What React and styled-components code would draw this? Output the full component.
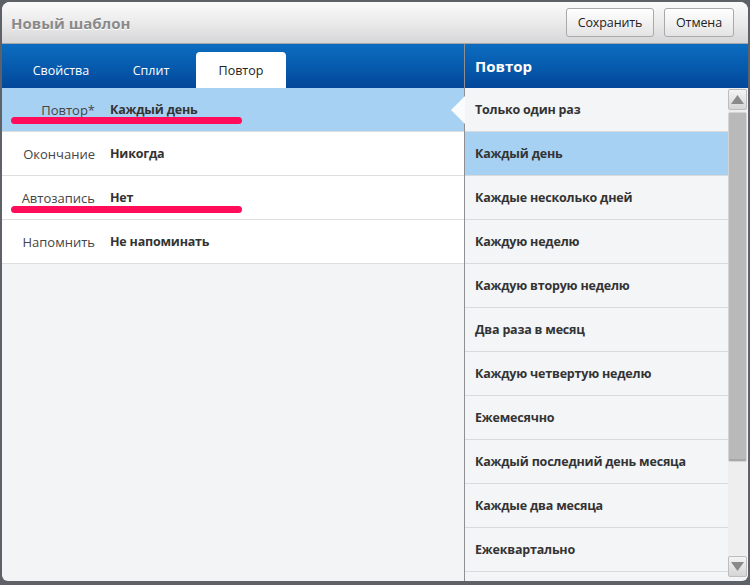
import React from "react";
import styled, { createGlobalStyle } from "styled-components";

const Global = createGlobalStyle`
  html, body { margin: 0; padding: 0; background: #5e6268; }
  body { font-family: "Open Sans", "Liberation Sans", sans-serif; }
  #root { padding: 2px 2px 0 2px; }
`;

const Window = styled.div`
  height: 579px;
  border-radius: 8px 8px 6px 6px;
  overflow: hidden;
  background: #f3f4f6;
  display: flex;
  flex-direction: column;
`;

const TitleBar = styled.div`
  height: 41px;
  flex: none;
  display: flex;
  align-items: center;
  padding: 0 14px 0 9px;
  background: linear-gradient(#fbfbfb, #e9e9ea 55%, #d6d6d8);
  border-bottom: 1px solid #a7a7a7;
`;

const Title = styled.div`
  flex: 1;
  font-size: 15px;
  font-weight: 700;
  color: #8a8a8a;
  text-shadow: 0 1px 0 #fff;
`;

const Button = styled.button`
  font-family: inherit;
  font-size: 12.5px;
  letter-spacing: -0.1px;
  color: #222;
  height: 29px;
  width: ${(p) => p.$w}px;
  padding: 0;
  margin-left: 10px;
  border: 1px solid #a9a9a9;
  border-radius: 3px;
  background: linear-gradient(#ffffff, #f2f2f2 50%, #e3e3e3);
  box-shadow: inset 0 1px 0 #fff;
`;

const Body = styled.div`
  flex: 1;
  display: flex;
  min-height: 0;
`;

const LeftPanel = styled.div`
  width: 462px;
  flex: none;
  display: flex;
  flex-direction: column;
  border-right: 1px solid #8d8f93;
`;

const BlueBar = styled.div`
  height: 44px;
  flex: none;
  background: linear-gradient(#0c6dc0, #0659ac 55%, #03479a);
  display: flex;
  align-items: flex-end;
`;

const Tabs = styled(BlueBar)`
  padding-left: 14px;
`;

const Tab = styled.div`
  width: 90px;
  height: 36px;
  display: flex;
  align-items: center;
  justify-content: center;
  font-size: 12.5px;
  color: ${(p) => (p.$active ? "#222" : "#fff")};
  background: ${(p) => (p.$active ? "#fff" : "transparent")};
  border-radius: 4px 4px 0 0;
`;

const Row = styled.div`
  position: relative;
  height: 43px;
  display: flex;
  align-items: center;
  font-size: 13px;
  background: ${(p) => (p.$selected ? "#a7d1f2" : "#fff")};
  border-bottom: 1px solid #dedede;
`;

const Label = styled.div`
  width: 93px;
  text-align: right;
  color: #444;
`;

const Value = styled.div`
  margin-left: 15px;
  font-size: 12.5px;
  letter-spacing: -0.2px;
  font-weight: 700;
  color: #333;
`;

const Mark = styled.div`
  position: absolute;
  left: 9px;
  top: ${(p) => p.$top}px;
  width: 231px;
  height: 7px;
  border-radius: 4px;
  background: #ff0d5a;
`;

const Pointer = styled.div`
  position: absolute;
  right: -1px;
  top: 8px;
  width: 0;
  height: 0;
  border-top: 14px solid transparent;
  border-bottom: 14px solid transparent;
  border-right: 14px solid #fafbfc;
`;

const RightPanel = styled.div`
  flex: 1;
  display: flex;
  flex-direction: column;
  min-width: 0;
`;

const RightHeader = styled(BlueBar)`
  align-items: center;
  padding-left: 10px;
  font-size: 15px;
  font-weight: 700;
  color: #fff;
`;

const ListArea = styled.div`
  flex: 1;
  display: flex;
  min-height: 0;
  padding-bottom: 4px;
`;

const List = styled.div`
  flex: 1;
  overflow: hidden;
  background: #f4f5f7;
`;

const Item = styled.div`
  height: 43px;
  display: flex;
  align-items: center;
  padding-left: 10px;
  font-size: 12.5px;
  letter-spacing: -0.2px;
  font-weight: 700;
  color: #333;
  background: ${(p) => (p.$selected ? "#a7d1f2" : "#f4f5f7")};
  border-bottom: 1px solid #d9dadc;
`;

const Scrollbar = styled.div`
  width: 19px;
  flex: none;
  margin-right: 1px;
  display: flex;
  flex-direction: column;
  background: #eeeeee;
`;

const ScrollBtn = styled.div`
  height: 19px;
  flex: none;
  margin-top: ${(p) => (p.$down ? "auto" : "1px")};
  border: 1px solid #bdbdbd;
  border-radius: 2px;
  background: linear-gradient(#f4f4f4, #d5d5d5);
  display: flex;
  align-items: center;
  justify-content: center;
`;

const Thumb = styled.div`
  height: 348px;
  margin-top: 2px;
  border: 1px solid #d4d4d4;
  border-radius: 2px;
  background: #b9b9b9;
  box-shadow: inset 0 -2px 0 #a8a8a8;
`;

const Arrow = ({ down }) => (
  <svg width="13" height="9" viewBox="0 0 13 9">
    <polygon
      points={down ? "0,0 13,0 6.5,9" : "0,9 13,9 6.5,0"}
      fill="#8a8a8a"
    />
  </svg>
);

const rows = [
  { label: "Повтор*", value: "Каждый день", selected: true, mark: 29 },
  { label: "Окончание", value: "Никогда" },
  { label: "Автозапись", value: "Нет", mark: 30 },
  { label: "Напомнить", value: "Не напоминать" },
];

const items = [
  "Только один раз",
  "Каждый день",
  "Каждые несколько дней",
  "Каждую неделю",
  "Каждую вторую неделю",
  "Два раза в месяц",
  "Каждую четвертую неделю",
  "Ежемесячно",
  "Каждый последний день месяца",
  "Каждые два месяца",
  "Ежеквартально",
];

export default function App() {
  return (
    <>
      <Global />
      <Window>
        <TitleBar>
          <Title>Новый шаблон</Title>
          <Button $w={88}>Сохранить</Button>
          <Button $w={70}>Отмена</Button>
        </TitleBar>
        <Body>
          <LeftPanel>
            <Tabs>
              <Tab>Свойства</Tab>
              <Tab>Сплит</Tab>
              <Tab $active>Повтор</Tab>
            </Tabs>
            {rows.map((r) => (
              <Row key={r.label} $selected={r.selected}>
                <Label>{r.label}</Label>
                <Value>{r.value}</Value>
                {r.mark && <Mark $top={r.mark} />}
                {r.selected && <Pointer />}
              </Row>
            ))}
          </LeftPanel>
          <RightPanel>
            <RightHeader>Повтор</RightHeader>
            <ListArea>
              <List>
                {items.map((t, i) => (
                  <Item key={t} $selected={i === 1}>
                    {t}
                  </Item>
                ))}
              </List>
              <Scrollbar>
                <ScrollBtn>
                  <Arrow />
                </ScrollBtn>
                <Thumb />
                <ScrollBtn $down>
                  <Arrow down />
                </ScrollBtn>
              </Scrollbar>
            </ListArea>
          </RightPanel>
        </Body>
      </Window>
    </>
  );
}
